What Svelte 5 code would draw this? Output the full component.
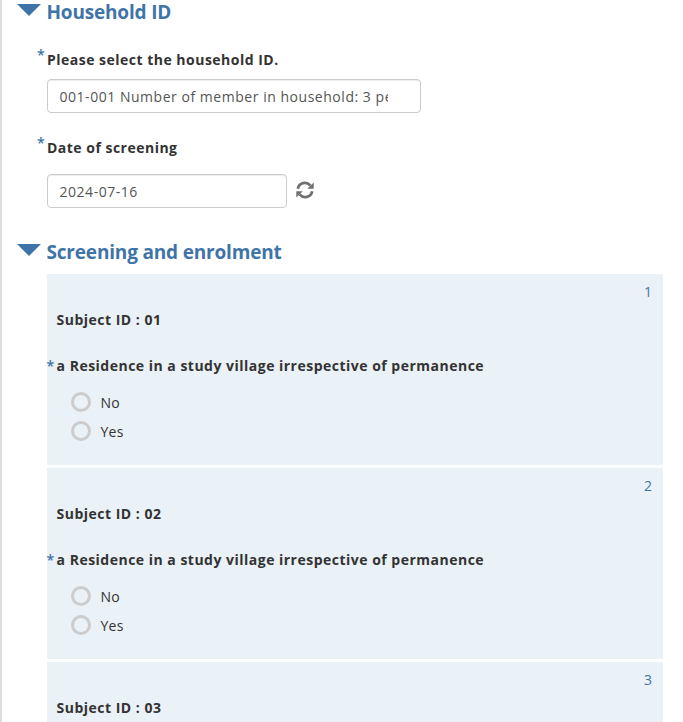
<script>
	let household = '001-001 Number of member in household: 3 people';
	let date = '2024-07-16';

	const residence = 'a Residence in a study village irrespective of permanence';
	const subjects = [
		{ id: '01', questions: [residence] },
		{ id: '02', questions: [residence] },
		{ id: '03', questions: [] }
	];
	const options = ['No', 'Yes'];
	let answers = {};

	function resetDate() {
		date = '';
	}
</script>

<div class="form">
	<section>
		<h4><span class="caret"></span>Household ID</h4>

		<label class="question household">
			<span class="label"><span class="required">*</span>Please select the household ID.</span>
			<input type="text" class="wide" bind:value={household} />
		</label>

		<div class="question date">
			<label class="label" for="date"><span class="required">*</span>Date of screening</label>
			<div class="row">
				<input type="text" id="date" bind:value={date} />
				<button type="button" aria-label="Reset" on:click={resetDate}>
					<svg viewBox="0 0 18 18" width="18" height="18">
						<path d="M1.8 7.8C3 1.6 10.4 0 14.4 4.6" />
						<path d="M16.2 10.2C15 16.4 7.6 18 3.6 13.4" />
						<path class="head" d="M17.7 1.4v6.4h-6.5z" />
						<path class="head" d="M.3 16.6v-6.4h6.5z" />
					</svg>
				</button>
			</div>
		</div>
	</section>

	<section>
		<h4><span class="caret"></span>Screening and enrolment</h4>

		{#each subjects as subject, i}
			<div class="repeat">
				<span class="number">{i + 1}</span>
				<p class="label">Subject ID : {subject.id}</p>
				{#each subject.questions as question}
					<fieldset>
						<legend class="label"><span class="required">*</span>{question}</legend>
						{#each options as option}
							<label class="option">
								<input
									type="radio"
									name={`residence-${subject.id}`}
									value={option}
									bind:group={answers[subject.id]}
								/>
								<span>{option}</span>
							</label>
						{/each}
					</fieldset>
				{/each}
			</div>
		{/each}
	</section>
</div>

<style>
	:global(body) {
		overflow: hidden;
		background: #fff;
	}

	.form {
		box-sizing: border-box;
		height: 722px;
		overflow: hidden;
		padding: 0 20px 0 45px;
		border-left: 2px solid #ddd;
		font-family: 'Open Sans', sans-serif;
		font-size: 14px;
		line-height: 20px;
		color: #333;
	}

	h4 {
		display: flex;
		align-items: flex-start;
		height: 24px;
		margin: 0 0 0 -30px;
		font-size: 19px;
		font-weight: 700;
		letter-spacing: -0.18px;
		line-height: 24px;
		color: #3f74a8;
	}

	.caret {
		width: 0;
		margin: 4px 5.5px 0 0;
		border: 12px solid transparent;
		border-top-color: #3f74a8;
		border-bottom: 0;
	}

	.label {
		display: block;
		position: relative;
		font-weight: 700;
		letter-spacing: 0.49px;
		white-space: nowrap;
	}

	.required {
		position: absolute;
		left: -10px;
		top: -5px;
		font-weight: 600;
		color: #3f74a8;
	}

	.question {
		display: block;
	}

	.household {
		margin-top: 26px;
	}

	.household input {
		margin-top: 9px;
	}

	.date {
		margin: 25px 0 32px;
	}

	.row {
		display: flex;
		align-items: center;
		margin-top: 16px;
	}

	input[type='text'] {
		display: block;
		box-sizing: border-box;
		width: 240px;
		height: 34px;
		padding: 6px 12px 6px 11.5px;
		border: 1px solid #ccc;
		border-radius: 4px;
		box-shadow: inset 0 1px 1px rgba(0, 0, 0, 0.075);
		font: inherit;
		letter-spacing: 0.53px;
		color: #555;
		background: #fff;
	}

	input.wide {
		width: 374px;
		padding-right: 32px;
	}

	button {
		display: flex;
		margin: -2px 0 0 9px;
		padding: 0;
		border: 0;
		background: none;
	}

	svg path {
		fill: none;
		stroke: #707070;
		stroke-width: 2.8;
	}

	svg .head {
		fill: #707070;
		stroke: none;
	}

	.repeat {
		position: relative;
		box-sizing: border-box;
		height: 191px;
		margin-bottom: 3px;
		padding: 36px 10px 0 9.6px;
		background: #eaf1f7;
	}

	h4 + .repeat {
		margin-top: 10px;
	}

	.number {
		position: absolute;
		top: 8px;
		right: 11px;
		color: #3f74a8;
	}

	p {
		margin: 0 0 26px;
	}

	fieldset {
		min-width: 0;
		margin: 0;
		padding: 0;
		border: 0;
	}

	legend {
		margin-bottom: 16px;
		padding: 0;
	}

	legend .required {
		top: 0;
	}

	.option {
		display: flex;
		align-items: center;
		height: 20px;
		margin: 0 0 9px 14.4px;
	}

	.option span {
		padding-top: 1px;
		letter-spacing: 0.2px;
	}

	.option input {
		appearance: none;
		box-sizing: border-box;
		width: 20px;
		height: 20px;
		margin: 0 9.6px 0 0;
		border: 3px solid #ccc;
		border-radius: 50%;
	}

	.option input:checked {
		background: #666;
		background-clip: content-box;
		padding: 2px;
	}
</style>
